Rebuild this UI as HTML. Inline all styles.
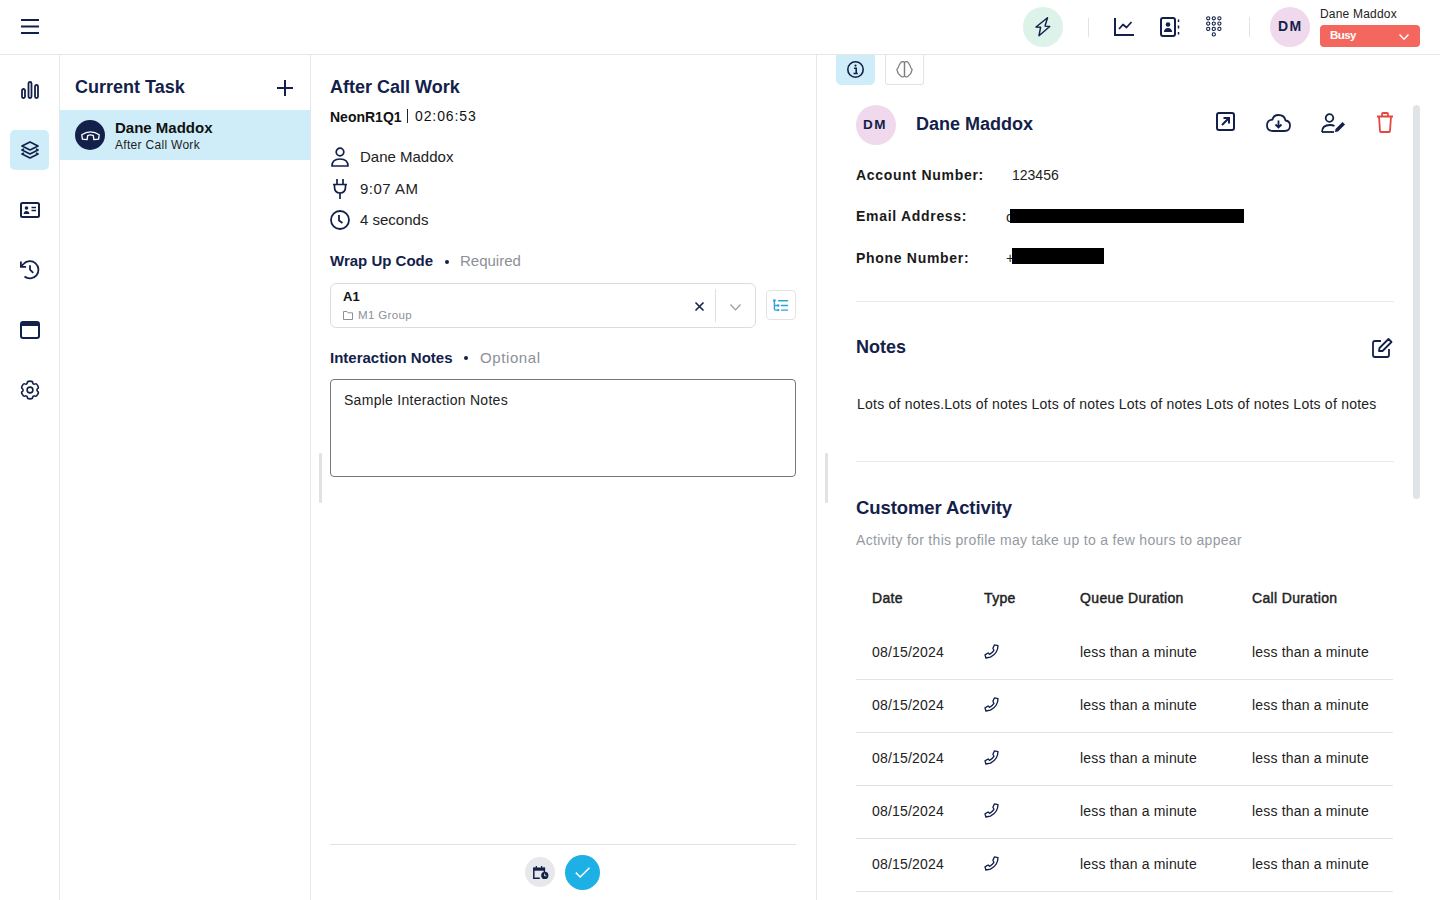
<!DOCTYPE html>
<html><head><meta charset="utf-8">
<style>
*{box-sizing:border-box;margin:0;padding:0}
html,body{width:1440px;height:900px;overflow:hidden;background:#fff;font-family:"Liberation Sans",sans-serif;color:#1a1a1a}
.abs{position:absolute}
.navy{color:#13214a}
.hdr{position:absolute;left:0;top:0;width:1440px;height:55px;border-bottom:1px solid #e6e6e6;background:#fff}
.rail{position:absolute;left:0;top:55px;width:60px;height:845px;border-right:1px solid #e6e6e6}
.tasks{position:absolute;left:60px;top:55px;width:251px;height:845px;border-right:1px solid #e6e6e6}
.mid{position:absolute;left:311px;top:55px;width:506px;height:845px;border-right:1px solid #e6e6e6}
.t{position:absolute;white-space:nowrap;line-height:1}
svg{position:absolute;overflow:visible}
</style></head>
<body>
<!-- HEADER -->
<div class="hdr">
  <svg style="left:21px;top:19px" width="18" height="15" viewBox="0 0 18 15"><g stroke="#13214a" stroke-width="2" stroke-linecap="butt"><line x1="0" y1="1" x2="18" y2="1"/><line x1="0" y1="7.5" x2="18" y2="7.5"/><line x1="0" y1="14" x2="18" y2="14"/></g></svg>

  <div class="abs" style="left:1023px;top:7px;width:40px;height:40px;border-radius:50%;background:#ddf2e8"></div>
  <svg style="left:1033px;top:15px" width="20" height="24" viewBox="0 0 20 24"><path d="M14.5 2.8 L3 12 L7.6 12.3 L6 20.7 L16.7 11.5 L12 11.1 Z" fill="none" stroke="#13214a" stroke-width="1.45" stroke-linejoin="round"/></svg>
  <div class="abs" style="left:1088px;top:18px;width:1px;height:19px;background:#e3e3e3"></div>
  <!-- chart -->
  <svg style="left:1114px;top:18px" width="20" height="18" viewBox="0 0 20 18"><path d="M1 0 V17 H20" fill="none" stroke="#13214a" stroke-width="2"/><path d="M5 11 L9 6.5 L12.5 9.5 L17.5 4" fill="none" stroke="#13214a" stroke-width="1.8" stroke-linejoin="round"/></svg>
  <!-- contact book -->
  <svg style="left:1160px;top:17px" width="20" height="20" viewBox="0 0 20 20"><rect x="1" y="1" width="14" height="18" rx="2" fill="none" stroke="#13214a" stroke-width="2"/><circle cx="8" cy="7.5" r="2.3" fill="#13214a"/><path d="M3.8 15 Q4.5 11 8 11 Q11.5 11 12.2 15 Z" fill="#13214a"/><path d="M18.5 2.5 V5 M18.5 8.5 V11.5 M18.5 15 V17.5" stroke="#13214a" stroke-width="1.5"/></svg>
  <!-- keypad -->
  <svg style="left:1206px;top:16px" width="16" height="21" viewBox="0 0 16 21"><g fill="none" stroke="#13214a" stroke-width="1.1"><circle cx="2.2" cy="2.3" r="1.6"/><circle cx="7.8" cy="2.3" r="1.6"/><circle cx="13.4" cy="2.3" r="1.6"/><circle cx="2.2" cy="7.6" r="1.6"/><circle cx="7.8" cy="7.6" r="1.6"/><circle cx="13.4" cy="7.6" r="1.6"/><circle cx="2.2" cy="12.9" r="1.6"/><circle cx="7.8" cy="12.9" r="1.6"/><circle cx="13.4" cy="12.9" r="1.6"/><circle cx="7.8" cy="18.4" r="1.6"/></g></svg>
  <div class="abs" style="left:1249px;top:17px;width:1px;height:20px;background:#e3e3e3"></div>
  <div class="abs" style="left:1270px;top:7px;width:40px;height:40px;border-radius:50%;background:#f0d9ec"></div>
  <div class="t navy" style="left:1278px;top:19px;font-size:14px;font-weight:bold;letter-spacing:1.5px">DM</div>
  <div class="t" style="left:1320px;top:8px;font-size:12px;letter-spacing:0.2px;color:#222">Dane Maddox</div>
  <div class="abs" style="left:1320px;top:25px;width:100px;height:22px;border-radius:4px;background:#f3675e"></div>
  <div class="t" style="left:1330px;top:30px;font-size:11.5px;font-weight:bold;letter-spacing:-0.6px;color:#fff">Busy</div>
  <svg style="left:1399px;top:34px" width="10" height="6" viewBox="0 0 10 6"><path d="M0.5 0.5 L5 5.2 L9.5 0.5" fill="none" stroke="#fff" stroke-width="1.4"/></svg>
</div>

<!-- RAIL -->
<div class="rail">
  <div class="abs" style="left:10px;top:75px;width:39px;height:40px;border-radius:5px;background:#cfedf8"></div>
</div>
<!-- bar chart -->
<svg style="left:21px;top:81px" width="18" height="18" viewBox="0 0 18 18"><g fill="none" stroke="#13214a" stroke-width="1.8"><rect x="1" y="8" width="3" height="9" rx="1.5"/><rect x="7.5" y="1" width="3" height="16" rx="1.5"/><rect x="14" y="4" width="3" height="13" rx="1.5"/></g></svg>
<!-- layers -->
<svg style="left:21px;top:141px" width="18" height="18" viewBox="0 0 18 18"><g fill="none" stroke="#13214a" stroke-width="1.7" stroke-linejoin="round"><path d="M9 1 L17 5 L9 9 L1 5 Z"/><path d="M3 8 L1 9 L9 13 L17 9 L15 8"/><path d="M3 12 L1 13 L9 17 L17 13 L15 12"/></g></svg>
<!-- id card -->
<svg style="left:20px;top:202px" width="20" height="16" viewBox="0 0 20 16"><rect x="1" y="1" width="18" height="14" rx="1.5" fill="none" stroke="#13214a" stroke-width="2"/><circle cx="6.5" cy="6" r="1.8" fill="#13214a"/><path d="M3.5 12 Q4 9 6.5 9 Q9 9 9.5 12 Z" fill="#13214a"/><path d="M11.5 5.5 H16 M11.5 8.5 H16" stroke="#13214a" stroke-width="1.6"/></svg>
<!-- history -->
<svg style="left:20px;top:259px" width="20" height="21" viewBox="0 0 20 21"><g fill="none" stroke="#13214a" stroke-width="1.8"><path d="M3.6 4.9 A8.6 8.6 0 1 1 4.5 17.5"/><path d="M3.6 4.9 L1.4 7.2"/><path d="M0.9 2.4 V7.8 H6.1"/><path d="M10 6.3 V10.6 L13.2 13.9"/></g></svg>
<!-- window -->
<svg style="left:20px;top:321px" width="20" height="18" viewBox="0 0 20 18"><rect x="1" y="1" width="18" height="16" rx="2" fill="none" stroke="#13214a" stroke-width="2"/><rect x="1" y="1" width="18" height="4" fill="#13214a"/></svg>
<!-- gear -->
<svg style="left:20px;top:380px" width="20" height="20" viewBox="0 0 20 20"><path d="M6.14 4.17 Q6.50 3.94 6.88 3.75 Q7.26 3.56 7.36 2.36 Q7.46 1.16 10.00 1.16 Q12.54 1.16 12.64 2.36 Q12.74 3.56 13.12 3.75 Q13.50 3.94 13.86 4.17 Q14.21 4.41 15.30 3.90 Q16.39 3.38 17.66 5.58 Q18.93 7.77 17.94 8.46 Q16.95 9.15 16.97 9.57 Q17.00 10.00 16.97 10.43 Q16.95 10.85 17.94 11.54 Q18.93 12.23 17.66 14.42 Q16.39 16.62 15.30 16.10 Q14.21 15.59 13.86 15.83 Q13.50 16.06 13.12 16.25 Q12.74 16.44 12.64 17.64 Q12.54 18.84 10.00 18.84 Q7.46 18.84 7.36 17.64 Q7.26 16.44 6.88 16.25 Q6.50 16.06 6.14 15.83 Q5.79 15.59 4.70 16.10 Q3.61 16.62 2.34 14.42 Q1.07 12.23 2.06 11.54 Q3.05 10.85 3.03 10.43 Q3.00 10.00 3.03 9.57 Q3.05 9.15 2.06 8.46 Q1.07 7.77 2.34 5.58 Q3.61 3.38 4.70 3.90 Q5.79 4.41 6.14 4.17 Z" fill="none" stroke="#13214a" stroke-width="1.6" stroke-linejoin="round"/><circle cx="10" cy="10" r="2.9" fill="none" stroke="#13214a" stroke-width="1.6"/></svg>

<!-- TASKS -->
<div class="tasks"></div>
<div class="t navy" style="left:75px;top:78px;font-size:18px;font-weight:bold">Current Task</div>
<svg style="left:277px;top:80px" width="16" height="16" viewBox="0 0 16 16"><path d="M8 0 V16 M0 8 H16" stroke="#13214a" stroke-width="2"/></svg>
<div class="abs" style="left:60px;top:110px;width:250px;height:50px;background:#cfedf8"></div>
<div class="abs" style="left:75px;top:120px;width:30px;height:30px;border-radius:50%;background:#13214a"></div>
<svg style="left:81px;top:130px" width="19" height="11" viewBox="0 0 19 11"><path d="M0.8 4.8 Q9.5 -1.2 18.2 4.8 L17.6 9.2 L12.9 9.6 L12.3 5.6 Q9.5 4.3 6.7 5.6 L6.1 9.6 L1.4 9.2 Z" fill="none" stroke="#fff" stroke-width="1.3" stroke-linejoin="round"/></svg>
<div class="t" style="left:115px;top:120px;font-size:15px;font-weight:bold;color:#111">Dane Maddox</div>
<div class="t" style="left:115px;top:139px;font-size:12px;letter-spacing:0.3px;color:#222">After Call Work</div>

<!-- MIDDLE -->
<div class="mid"></div>
<div class="abs" style="left:319px;top:453px;width:3px;height:50px;background:#e0e3e6;border-radius:1px"></div>
<div class="abs" style="left:825px;top:453px;width:3px;height:50px;background:#e0e3e6;border-radius:1px"></div>

<div class="t navy" style="left:330px;top:78px;font-size:18px;font-weight:bold">After Call Work</div>
<div class="t" style="left:330px;top:110px;font-size:14px;color:#111;font-weight:bold">NeonR1Q1</div>
<div class="abs" style="left:407px;top:109px;width:1.4px;height:14px;background:#222"></div>
<div class="t" style="left:415px;top:109px;font-size:14px;letter-spacing:0.9px;color:#111">02:06:53</div>

<svg style="left:331px;top:147px" width="18" height="20" viewBox="0 0 18 20"><circle cx="9" cy="5" r="3.8" fill="none" stroke="#13214a" stroke-width="1.7"/><path d="M1 19 Q1 12 9 12 Q17 12 17 19 Z" fill="none" stroke="#13214a" stroke-width="1.7" stroke-linejoin="round"/></svg>
<div class="t" style="left:360px;top:149px;font-size:15px;color:#222">Dane Maddox</div>
<svg style="left:332px;top:179px" width="16" height="20" viewBox="0 0 16 20"><path d="M5 0 V5 M11 0 V5" stroke="#13214a" stroke-width="1.7"/><path d="M1 5.5 H15 M2.5 5.5 V8 Q2.5 14 8 14 Q13.5 14 13.5 8 V5.5" fill="none" stroke="#13214a" stroke-width="1.7"/><path d="M8 14 V20" stroke="#13214a" stroke-width="1.7"/></svg>
<div class="t" style="left:360px;top:181px;font-size:15px;letter-spacing:0.5px;color:#222">9:07 AM</div>
<svg style="left:330px;top:210px" width="20" height="20" viewBox="0 0 20 20"><circle cx="10" cy="10" r="9" fill="none" stroke="#13214a" stroke-width="1.8"/><path d="M9 5 V10.5 L12.5 13" fill="none" stroke="#13214a" stroke-width="1.8"/></svg>
<div class="t" style="left:360px;top:212px;font-size:15px;color:#222">4 seconds</div>

<div class="t navy" style="left:330px;top:253px;font-size:15px;font-weight:bold">Wrap Up Code</div>
<div class="abs" style="left:445px;top:260px;width:4px;height:4px;border-radius:50%;background:#13214a"></div>
<div class="t" style="left:460px;top:253px;font-size:15px;color:#8c9097">Required</div>

<div class="abs" style="left:330px;top:283px;width:426px;height:45px;border:1px solid #dcdcdc;border-radius:6px"></div>
<div class="t" style="left:343px;top:290px;font-size:13px;font-weight:bold;color:#111">A1</div>
<svg style="left:343px;top:311px" width="10" height="9" viewBox="0 0 10 9"><path d="M0.5 0.5 H4 L5 1.8 H9.5 V8.5 H0.5 Z" fill="none" stroke="#8c9097" stroke-width="1"/></svg>
<div class="t" style="left:358px;top:309.5px;font-size:11.5px;letter-spacing:0.35px;color:#8c9097">M1 Group</div>
<svg style="left:695px;top:302px" width="9" height="9" viewBox="0 0 9 9"><path d="M0.5 0.5 L8.5 8.5 M8.5 0.5 L0.5 8.5" stroke="#13214a" stroke-width="1.6"/></svg>
<div class="abs" style="left:715px;top:289px;width:1px;height:33px;background:#e0e0e0"></div>
<svg style="left:730px;top:304px" width="11" height="7" viewBox="0 0 11 7"><path d="M0.5 0.5 L5.5 5.8 L10.5 0.5" fill="none" stroke="#999" stroke-width="1.2"/></svg>
<div class="abs" style="left:766px;top:290px;width:30px;height:30px;border:1px solid #e3e3e3;border-radius:4px"></div>
<svg style="left:773px;top:299px" width="16" height="13" viewBox="0 0 16 13"><g stroke="#2aa5d8" stroke-width="1.4" fill="none" stroke-linecap="round"><path d="M1.4 1.6 V10 Q1.4 11.1 2.5 11.1 H5 M1.4 6.5 H5"/><path d="M5.6 1.8 H14.6 M8.4 6.5 H14.6 M8.4 11.1 H14.6"/></g><g fill="#2aa5d8"><circle cx="1.4" cy="1.6" r="1.4"/><circle cx="5.2" cy="6.5" r="1.2"/><circle cx="5.2" cy="11.1" r="1.2"/></g></svg>

<div class="t navy" style="left:330px;top:350px;font-size:15px;font-weight:bold">Interaction Notes</div>
<div class="abs" style="left:464px;top:356px;width:4px;height:4px;border-radius:50%;background:#13214a"></div>
<div class="t" style="left:480px;top:350px;font-size:15px;letter-spacing:0.6px;color:#8c9097">Optional</div>

<div class="abs" style="left:330px;top:379px;width:466px;height:98px;border:1px solid #777;border-radius:4px"></div>
<div class="t" style="left:344px;top:393px;font-size:14px;letter-spacing:0.28px;color:#222">Sample Interaction Notes</div>

<div class="abs" style="left:330px;top:844px;width:466px;height:1px;background:#e3e3e3"></div>
<div class="abs" style="left:525px;top:857px;width:30px;height:30px;border-radius:50%;background:#e6e8eb"></div>
<svg style="left:533px;top:866px" width="16" height="13" viewBox="0 0 16 13"><path d="M3.3 0 V2.5 M8.7 0 V2.5" stroke="#13214a" stroke-width="1.3"/><rect x="0.6" y="1.5" width="11" height="3.2" fill="#13214a"/><path d="M0.8 1.5 V12.2 H6.8 M11.4 1.5 V6" fill="none" stroke="#13214a" stroke-width="1.5"/><circle cx="11.8" cy="9.4" r="3.6" fill="#13214a"/><path d="M11.6 7.6 V9.8 H13.4" stroke="#e6e8eb" stroke-width="0.9" fill="none"/></svg>
<div class="abs" style="left:565px;top:855px;width:35px;height:35px;border-radius:50%;background:#1db0e5"></div>
<svg style="left:575px;top:867px" width="15" height="11" viewBox="0 0 15 11"><path d="M0.8 5.6 L5.2 10 L14.5 0.7" fill="none" stroke="#fff" stroke-width="1.5"/></svg>

<!-- RIGHT PANEL -->
<div class="abs" style="left:836px;top:55px;width:39px;height:30px;border-radius:0 0 5px 5px;background:#cfedf8"></div>
<svg style="left:846px;top:60px" width="19" height="19" viewBox="0 0 19 19"><circle cx="9.5" cy="9.5" r="7.7" fill="none" stroke="#13214a" stroke-width="1.6"/><circle cx="9.5" cy="5.6" r="1.1" fill="#13214a"/><path d="M8 8.2 H10.2 V13.2 M7.5 13.5 H11.8" fill="none" stroke="#13214a" stroke-width="1.6"/></svg>
<div class="abs" style="left:885px;top:55px;width:39px;height:30px;border:1px solid #e3e3e3;border-top:none;border-radius:0 0 3px 3px;background:#fff"></div>
<svg style="left:896px;top:61px" width="17" height="17" viewBox="0 0 17 17"><g fill="none" stroke="#7d7d7d" stroke-width="1.25" stroke-linejoin="round"><path d="M8.5 1.6 C7.6 0.2 5.6 0.3 4.8 1.6 C3.6 3.2 2.6 4.6 2.3 6.4 C2.4 7.2 0.9 7.6 0.9 8.6 C0.9 9.6 1.8 10.2 1.7 11.2 C1.9 12.8 3 13.8 4.2 14.3 C5.4 16.4 7.6 16.4 8.5 15 Z"/><path d="M8.5 1.6 C9.4 0.2 11.4 0.3 12.2 1.6 C13.4 3.2 14.4 4.6 14.7 6.4 C14.6 7.2 16.1 7.6 16.1 8.6 C16.1 9.6 15.2 10.2 15.3 11.2 C15.1 12.8 14 13.8 12.8 14.3 C11.6 16.4 9.4 16.4 8.5 15 Z"/></g></svg>

<div class="abs" style="left:856px;top:105px;width:40px;height:40px;border-radius:50%;background:#f0d9ec"></div>
<div class="t navy" style="left:863px;top:117.5px;font-size:13.5px;font-weight:bold;letter-spacing:1.6px">DM</div>
<div class="t navy" style="left:916px;top:115px;font-size:18px;font-weight:bold">Dane Maddox</div>

<!-- header icons -->
<svg style="left:1216px;top:112px" width="19" height="19" viewBox="0 0 19 19"><rect x="1" y="1" width="17" height="17" rx="2" fill="none" stroke="#13214a" stroke-width="2"/><path d="M6 13 L13 6 M7.5 6 H13 V11.5" fill="none" stroke="#13214a" stroke-width="2"/></svg>
<svg style="left:1266px;top:114px" width="25" height="18" viewBox="0 0 25 18"><path d="M7 17 H18.5 Q24 17 24 11.5 Q24 7 19.5 6.5 Q18.5 1 12.5 1 Q7.5 1 6.5 5.5 Q1 6 1 11.5 Q1 17 7 17 Z" fill="none" stroke="#13214a" stroke-width="1.8" stroke-linejoin="round"/><path d="M12.5 6.5 V13 M9.5 10.5 L12.5 13.5 L15.5 10.5" fill="none" stroke="#13214a" stroke-width="1.8"/></svg>
<svg style="left:1321px;top:113px" width="25" height="20" viewBox="0 0 25 20"><circle cx="8.5" cy="5" r="3.8" fill="none" stroke="#13214a" stroke-width="1.8"/><path d="M1 19 Q1 12 9 12 Q12 12 13.5 13" fill="none" stroke="#13214a" stroke-width="1.8"/><path d="M1 19 H13" stroke="#13214a" stroke-width="1.8"/><path d="M14 19 L14.5 16 L21.5 9 L24 11.5 L17 18.5 Z" fill="#13214a"/></svg>
<svg style="left:1376px;top:112px" width="18" height="21" viewBox="0 0 18 21"><path d="M1 4.5 H17 M6 4.5 V2 Q6 1 7 1 H11 Q12 1 12 2 V4.5" fill="none" stroke="#e5473d" stroke-width="1.8"/><path d="M3 4.5 L4 19 Q4 20 5 20 H13 Q14 20 14 19 L15 4.5" fill="none" stroke="#e5473d" stroke-width="1.8"/></svg>

<div class="abs" style="left:1413px;top:105px;width:7px;height:394px;border-radius:4px;background:#e1e4e7"></div>

<div class="t" style="left:856px;top:168px;font-size:14px;font-weight:bold;letter-spacing:0.7px;color:#1a1a1a">Account Number:</div>
<div class="t" style="left:1012px;top:168px;font-size:14px;color:#222">123456</div>
<div class="t" style="left:856px;top:209px;font-size:14px;font-weight:bold;letter-spacing:0.7px;color:#1a1a1a">Email Address:</div>
<div class="t" style="left:1006px;top:210px;font-size:14px;color:#222">c</div>
<div class="abs" style="left:1010px;top:209px;width:234px;height:14px;background:#000"></div>
<div class="t" style="left:856px;top:251px;font-size:14px;font-weight:bold;letter-spacing:0.7px;color:#1a1a1a">Phone Number:</div>
<div class="t" style="left:1006px;top:251px;font-size:14px;color:#222">+</div>
<div class="abs" style="left:1012px;top:248px;width:92px;height:16px;background:#000"></div>

<div class="abs" style="left:856px;top:301px;width:538px;height:1px;background:#e8eaec"></div>
<div class="t navy" style="left:856px;top:338px;font-size:18px;font-weight:bold">Notes</div>
<svg style="left:1372px;top:338px" width="21" height="20" viewBox="0 0 21 20"><path d="M9 3 H3 Q1 3 1 5 V17 Q1 19 3 19 H15 Q17 19 17 17 V11" fill="none" stroke="#13214a" stroke-width="1.8"/><path d="M7 13 L7.5 10 L16.5 1 L19.5 4 L10.5 13 Z" fill="none" stroke="#13214a" stroke-width="1.8" stroke-linejoin="round"/></svg>
<div class="t" style="left:857px;top:397px;font-size:14px;letter-spacing:0.23px;color:#222">Lots of notes.Lots of notes Lots of notes Lots of notes Lots of notes Lots of notes</div>
<div class="abs" style="left:856px;top:461px;width:538px;height:1px;background:#e8eaec"></div>

<div class="t navy" style="left:856px;top:498.5px;font-size:18.5px;font-weight:bold;letter-spacing:-0.1px">Customer Activity</div>
<div class="t" style="left:856px;top:533px;font-size:14px;letter-spacing:0.3px;color:#959aa1">Activity for this profile may take up to a few hours to appear</div>

<div class="t" style="left:872px;top:591px;font-size:14px;-webkit-text-stroke:0.45px #222;letter-spacing:0.35px;color:#222">Date</div>
<div class="t" style="left:984px;top:591px;font-size:14px;-webkit-text-stroke:0.45px #222;letter-spacing:0.35px;color:#222">Type</div>
<div class="t" style="left:1080px;top:591px;font-size:14px;-webkit-text-stroke:0.45px #222;letter-spacing:0.35px;color:#222">Queue Duration</div>
<div class="t" style="left:1252px;top:591px;font-size:14px;-webkit-text-stroke:0.45px #222;letter-spacing:0.35px;color:#222">Call Duration</div>

<div class="t" style="left:872px;top:645px;font-size:14px;letter-spacing:0.2px;color:#222">08/15/2024</div>
<svg style="left:984px;top:644px" width="16" height="15" viewBox="0 0 16 15"><path d="M10.4 0.9 L14 1.7 Q13.9 5 12.4 7.8 Q10.5 11.3 6.4 13.2 L1.9 14 L1 10.8 L4.1 9 L5.5 10.3 Q8.6 8.5 9.9 6.3 L8.9 4.3 Z" fill="none" stroke="#13214a" stroke-width="1.35" stroke-linejoin="round"/></svg>
<div class="t" style="left:1080px;top:645px;font-size:14px;letter-spacing:0.18px;color:#222">less than a minute</div>
<div class="t" style="left:1252px;top:645px;font-size:14px;letter-spacing:0.18px;color:#222">less than a minute</div>
<div class="abs" style="left:856px;top:679px;width:537px;height:1px;background:#e3e3e3"></div>
<div class="t" style="left:872px;top:698px;font-size:14px;letter-spacing:0.2px;color:#222">08/15/2024</div>
<svg style="left:984px;top:697px" width="16" height="15" viewBox="0 0 16 15"><path d="M10.4 0.9 L14 1.7 Q13.9 5 12.4 7.8 Q10.5 11.3 6.4 13.2 L1.9 14 L1 10.8 L4.1 9 L5.5 10.3 Q8.6 8.5 9.9 6.3 L8.9 4.3 Z" fill="none" stroke="#13214a" stroke-width="1.35" stroke-linejoin="round"/></svg>
<div class="t" style="left:1080px;top:698px;font-size:14px;letter-spacing:0.18px;color:#222">less than a minute</div>
<div class="t" style="left:1252px;top:698px;font-size:14px;letter-spacing:0.18px;color:#222">less than a minute</div>
<div class="abs" style="left:856px;top:732px;width:537px;height:1px;background:#e3e3e3"></div>
<div class="t" style="left:872px;top:751px;font-size:14px;letter-spacing:0.2px;color:#222">08/15/2024</div>
<svg style="left:984px;top:750px" width="16" height="15" viewBox="0 0 16 15"><path d="M10.4 0.9 L14 1.7 Q13.9 5 12.4 7.8 Q10.5 11.3 6.4 13.2 L1.9 14 L1 10.8 L4.1 9 L5.5 10.3 Q8.6 8.5 9.9 6.3 L8.9 4.3 Z" fill="none" stroke="#13214a" stroke-width="1.35" stroke-linejoin="round"/></svg>
<div class="t" style="left:1080px;top:751px;font-size:14px;letter-spacing:0.18px;color:#222">less than a minute</div>
<div class="t" style="left:1252px;top:751px;font-size:14px;letter-spacing:0.18px;color:#222">less than a minute</div>
<div class="abs" style="left:856px;top:785px;width:537px;height:1px;background:#e3e3e3"></div>
<div class="t" style="left:872px;top:804px;font-size:14px;letter-spacing:0.2px;color:#222">08/15/2024</div>
<svg style="left:984px;top:803px" width="16" height="15" viewBox="0 0 16 15"><path d="M10.4 0.9 L14 1.7 Q13.9 5 12.4 7.8 Q10.5 11.3 6.4 13.2 L1.9 14 L1 10.8 L4.1 9 L5.5 10.3 Q8.6 8.5 9.9 6.3 L8.9 4.3 Z" fill="none" stroke="#13214a" stroke-width="1.35" stroke-linejoin="round"/></svg>
<div class="t" style="left:1080px;top:804px;font-size:14px;letter-spacing:0.18px;color:#222">less than a minute</div>
<div class="t" style="left:1252px;top:804px;font-size:14px;letter-spacing:0.18px;color:#222">less than a minute</div>
<div class="abs" style="left:856px;top:838px;width:537px;height:1px;background:#e3e3e3"></div>
<div class="t" style="left:872px;top:857px;font-size:14px;letter-spacing:0.2px;color:#222">08/15/2024</div>
<svg style="left:984px;top:856px" width="16" height="15" viewBox="0 0 16 15"><path d="M10.4 0.9 L14 1.7 Q13.9 5 12.4 7.8 Q10.5 11.3 6.4 13.2 L1.9 14 L1 10.8 L4.1 9 L5.5 10.3 Q8.6 8.5 9.9 6.3 L8.9 4.3 Z" fill="none" stroke="#13214a" stroke-width="1.35" stroke-linejoin="round"/></svg>
<div class="t" style="left:1080px;top:857px;font-size:14px;letter-spacing:0.18px;color:#222">less than a minute</div>
<div class="t" style="left:1252px;top:857px;font-size:14px;letter-spacing:0.18px;color:#222">less than a minute</div>
<div class="abs" style="left:856px;top:891px;width:537px;height:1px;background:#e3e3e3"></div>
</body></html>
